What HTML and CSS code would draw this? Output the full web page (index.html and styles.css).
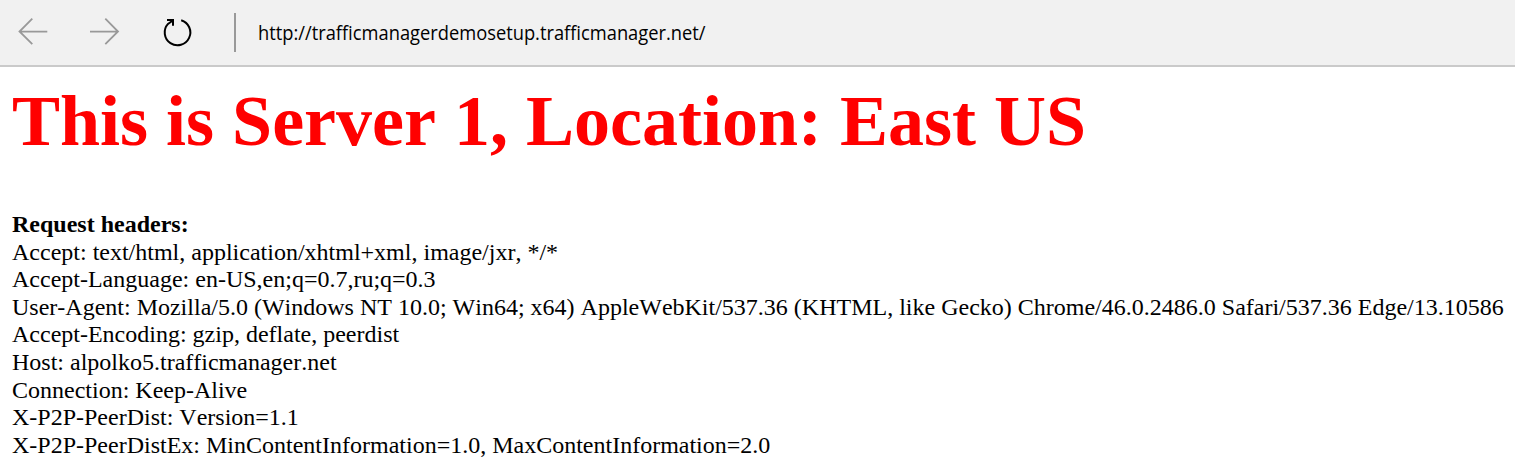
FILE: index.html
```html
<!DOCTYPE html>
<html lang="en">
<head>
<meta charset="utf-8">
<title>Server 1</title>
<link rel="stylesheet" href="styles.css">
</head>
<body>
<header class="toolbar">
<svg class="nav" width="220" height="66" viewBox="0 0 220 66" fill="none">
<g stroke="#999" stroke-width="1.800"><path d="M47.300 31.700H19.500M32.300 18.700L19.500 31.500L32.300 44.200"/><path d="M90 31.700H118M105.300 18.700L118 31.500L105.300 44.200"/></g>
<g stroke="#000" stroke-width="2"><path d="M181.200 20.200A12.800 12.800 0 1 1 168 23.900L172.800 20.500"/><path d="M167 20H173V25.800"/></g>
</svg>
<span class="divider"></span>
<span class="address">http://trafficmanagerdemosetup.trafficmanager.net/</span>
</header>
<main class="page">
<h1 class="title">This is Server 1, Location: East US</h1>
<div class="headers">
<div class="line"><b>Request headers:</b></div>
<div class="line">Accept: text/html, application/xhtml+xml, image/jxr, */*</div>
<div class="line">Accept-Language: en-US,en;q=0.7,ru;q=0.3</div>
<div class="line">User-Agent: Mozilla/5.0 (Windows NT 10.0; Win64; x64) AppleWebKit/537.36 (KHTML, like Gecko) Chrome/46.0.2486.0 Safari/537.36 Edge/13.10586</div>
<div class="line">Accept-Encoding: gzip, deflate, peerdist</div>
<div class="line">Host: alpolko5.trafficmanager.net</div>
<div class="line">Connection: Keep-Alive</div>
<div class="line">X-P2P-PeerDist: Version=1.1</div>
<div class="line">X-P2P-PeerDistEx: MinContentInformation=1.0, MaxContentInformation=2.0</div>
</div>
</main>
</body>
</html>
```
FILE: styles.css
```css
body { margin: 0; background: #fff; color: #000; font-family: "Liberation Serif", serif; font-kerning: none; overflow: hidden; }
.toolbar { display: flex; align-items: center; box-sizing: border-box; height: 67px; background: #f1f1f1; border-bottom: 2px solid #cacaca; }
.nav { flex: none; }
.divider { width: 2px; height: 39px; margin: 0 22px 0 14px; background: #999; }
.address { padding-top: 1px; font: 20px/28px "Open Sans", sans-serif; white-space: nowrap; transform: scaleX(.915); transform-origin: left; }
.page { padding: 13px 12px 0; }
.title { margin: 0 0 49px; font-size: 72px; line-height: 82px; color: #f00; white-space: nowrap; }
.headers { font-size: 24px; line-height: 27.6px; white-space: nowrap; }
```
